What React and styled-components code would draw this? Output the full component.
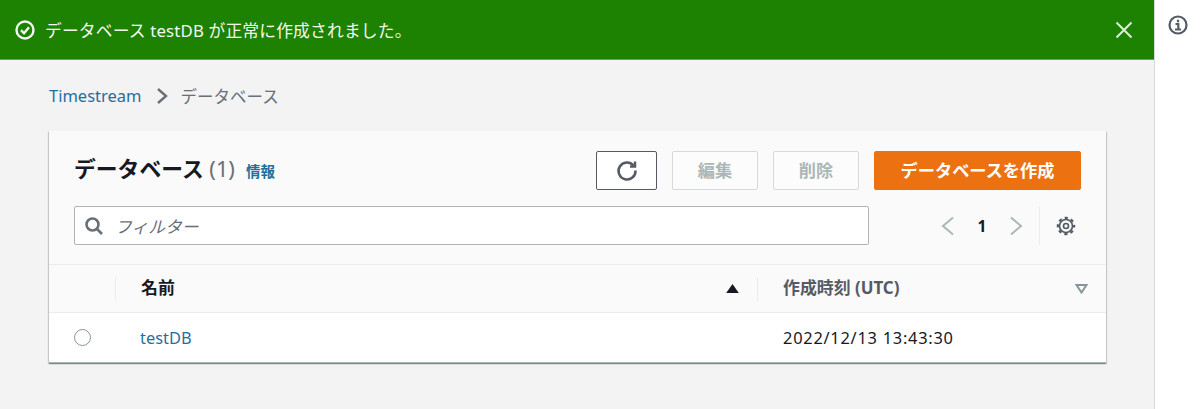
import React from 'react';
import styled, { createGlobalStyle } from 'styled-components';

const Global = createGlobalStyle`
  html, body { margin: 0; padding: 0; background: #fff; }
  body { font-family: "Noto Sans", "Noto Sans CJK JP", sans-serif; color: #16191f; }
`;

const Shell = styled.div`
  display: flex;
  width: 1200px;
  height: 409px;
  overflow: hidden;
`;

const Main = styled.div`
  width: 1154px;
  flex: none;
  background: #f3f3f3;
  display: flex;
  flex-direction: column;
`;

const Rail = styled.div`
  flex: 1;
  background: #fff;
  border-left: 1px solid #d5dbdb;
  display: flex;
  justify-content: center;
  padding-top: 15px;
  align-items: flex-start;
  color: #545b64;
`;

const Flash = styled.div`
  height: 59px;
  background: #1d8102;
  border-bottom: 1px solid #6f9e66;
  display: flex;
  align-items: center;
  padding: 0 21px 0 15px;
  color: #f2f8f0;
  font-size: 16.8px;
  letter-spacing: 0.15px;
`;

const FlashText = styled.span`
  margin-left: 10px;
  flex: 1;
`;

const Content = styled.div`
  padding: 0 48px 0 49px;
`;

const Crumbs = styled.div`
  height: 71px;
  display: flex;
  align-items: center;
  font-size: 16.5px;
  color: #687078;
`;

const Link = styled.a`
  color: #1f6f9e;
`;

const CrumbSep = styled.svg`
  margin: 0 12px 0 13px;
`;

const Card = styled.div`
  background: #fff;
  box-shadow: 0 1px 1px 0 rgba(0, 28, 36, 0.3), 1px 1px 1px 0 rgba(0, 28, 36, 0.15), -1px 1px 1px 0 rgba(0, 28, 36, 0.15);
  border-bottom: 1px solid #aab7b8;
`;

const CardHead = styled.div`
  background: #fafafa;
  padding: 20px 25px 20px 25px;
  display: flex;
  flex-direction: column;
  gap: 16px;
  border-bottom: 1px solid #eaeded;
  height: 93px;
`;

const HeadRow = styled.div`
  display: flex;
  align-items: center;
  justify-content: space-between;
  height: 39px;
`;

const TitleWrap = styled.div`
  display: flex;
  align-items: center;
  gap: 11px;
`;

const Title = styled.h1`
  margin: 0 0 3px;
  font-size: 21.8px;
  font-weight: 700;
  line-height: 34px;
`;

const Count = styled.span`
  font-weight: 400;
  color: #687078;
`;

const Info = styled(Link)`
  font-size: 14.5px;
  font-weight: 700;
`;

const Actions = styled.div`
  display: flex;
  gap: 15px;
`;

const Button = styled.button`
  height: 39px;
  width: ${p => p.$w}px;
  box-sizing: border-box;
  padding: 0 0 2px;
  border-radius: 2px;
  border: 1px solid ${p => p.$dark ? '#545b64' : '#d5dbdb'};
  background: ${p => p.$dark ? '#fff' : '#fcfcfc'};
  color: ${p => p.$dark ? '#545b64' : '#aab7b8'};
  font: 700 17.2px "Noto Sans", "Noto Sans CJK JP", sans-serif;
  display: flex;
  align-items: center;
  justify-content: center;
`;

const Primary = styled(Button)`
  background: #ec7211;
  border-color: #ec7211;
  color: #fff;
`;

const Search = styled.div`
  width: 795px;
  height: 39px;
  box-sizing: border-box;
  background: #fff;
  border: 1px solid #aab7b8;
  border-radius: 2px;
  display: flex;
  align-items: center;
  padding-left: 9px;
  gap: 11px;
  color: #687078;
`;

const Placeholder = styled.span`
  font-size: 16.8px;
  font-style: italic;
  color: #687078;
`;

const Pager = styled.div`
  display: flex;
  align-items: center;
  height: 39px;
  margin-right: 5px;
  color: #aab7b8;
`;

const PageNum = styled.span`
  font-weight: 700;
  font-size: 15.5px;
  width: 10px;
  text-align: center;
  color: #16191f;
  margin: 0 22px;
`;

const PagerSplit = styled.div`
  width: 1px;
  height: 39px;
  background: #eaeded;
  margin: 0 16px;
`;

const Row = styled.div`
  display: grid;
  grid-template-columns: 66px 1fr 349px;
  align-items: center;
  height: ${p => p.$h}px;
  background: ${p => p.$head ? '#fafafa' : '#fff'};
  border-bottom: ${p => p.$head ? '1px solid #eaeded' : 'none'};
`;

const Cell = styled.div`
  display: flex;
  align-items: center;
  justify-content: space-between;
  padding: 0 18px 0 25px;
  height: 24px;
  font-size: 16.4px;
  line-height: 24px;
  border-left: ${p => p.$split ? '1px solid #eaeded' : 'none'};
`;

const HeadLabel = styled.span`
  font-weight: 700;
  font-size: 16.9px;
  margin-top: -2px;
  color: ${p => p.$muted ? '#545b64' : '#16191f'};
`;

const DateText = styled.span`
  letter-spacing: 0.75px;
  margin-left: 1px;
`;

const Radio = styled.span`
  width: 15px;
  height: 15px;
  border: 1.5px solid #879596;
  border-radius: 50%;
  background: #fff;
`;

const Chevron = ({ left }) => (
  <svg width="14" height="22" viewBox="0 0 14 22" fill="none" stroke="currentColor" strokeWidth="2">
    <path d={left ? 'M12 2.500 2 11l10 8.500' : 'M2 2.500 12 11 2 19.500'} />
  </svg>
);

export default function App() {
  return (
    <Shell>
      <Global />
      <Main>
        <Flash>
          <svg width="20" height="20" viewBox="0 0 20 20" fill="none" stroke="currentColor" strokeWidth="2.400">
            <circle cx="10" cy="10" r="8.500" />
            <path d="M6 10.200l3 3 5-6" />
          </svg>
          <FlashText>データベース testDB が正常に作成されました。</FlashText>
          <svg width="18" height="18" viewBox="0 0 18 18" fill="none" stroke="#dcefd8" strokeWidth="2">
            <path d="M1.500 1.500l15 15M16.500 1.500l-15 15" />
          </svg>
        </Flash>
        <Content>
          <Crumbs>
            <Link>Timestream</Link>
            <CrumbSep width="14" height="20" viewBox="0 0 14 20" fill="none" stroke="#687078" strokeWidth="2.400">
              <path d="M3 3l8 7-8 7" />
            </CrumbSep>
            データベース
          </Crumbs>
          <Card>
            <CardHead>
              <HeadRow>
                <TitleWrap>
                  <Title>データベース <Count>(1)</Count></Title>
                  <Info>情報</Info>
                </TitleWrap>
                <Actions>
                  <Button $dark $w={61}>
                    <svg width="24" height="24" viewBox="0 0 24 24" fill="none" stroke="currentColor" strokeWidth="2.500">
                      <path d="M18.500 7.500A8.500 8.500 0 1 0 20.500 12.500" />
                      <path d="M20 3.500v5h-5" />
                    </svg>
                  </Button>
                  <Button $w={86}>編集</Button>
                  <Button $w={86}>削除</Button>
                  <Primary $w={207}>データベースを作成</Primary>
                </Actions>
              </HeadRow>
              <HeadRow>
                <Search>
                  <svg width="20" height="20" viewBox="0 0 20 20" fill="none" stroke="currentColor" strokeWidth="2.600">
                    <circle cx="8.500" cy="8.500" r="6" />
                    <path d="M13 13l5 5" />
                  </svg>
                  <Placeholder>フィルター</Placeholder>
                </Search>
                <Pager>
                  <Chevron left />
                  <PageNum>1</PageNum>
                  <Chevron />
                  <PagerSplit />
                  <svg width="20" height="20" viewBox="0 0 24 24" fill="none" stroke="#545b64">
                    <circle cx="12" cy="12" r="3" strokeWidth="2" />
                    <circle cx="12" cy="12" r="7.800" strokeWidth="2" />
                    <circle cx="12" cy="12" r="9.800" strokeWidth="2.600" strokeDasharray="3.850 3.850" strokeDashoffset="1.925" />
                  </svg>
                </Pager>
              </HeadRow>
            </CardHead>
            <Row $head $h={47}>
              <div />
              <Cell $split>
                <HeadLabel>名前</HeadLabel>
                <svg width="13" height="9" viewBox="0 0 14 10"><path d="M7 0l7 10H0z" fill="#16191f" /></svg>
              </Cell>
              <Cell $split>
                <HeadLabel $muted>作成時刻 (UTC)</HeadLabel>
                <svg width="13" height="10" viewBox="0 0 13 10" fill="none" stroke="#879596" strokeWidth="2"><path d="M1.500 1h10l-5 7.500z" /></svg>
              </Cell>
            </Row>
            <Row $h={49}>
              <Cell><Radio /></Cell>
              <Cell><Link>testDB</Link></Cell>
              <Cell><DateText>2022/12/13 13:43:30</DateText></Cell>
            </Row>
          </Card>
        </Content>
      </Main>
      <Rail>
        <svg width="20" height="20" viewBox="0 0 20 20" fill="none" stroke="currentColor" strokeWidth="2.200">
          <circle cx="10" cy="10" r="8.500" />
          <path d="M10 4.800v2.400M7.500 9h2.800v5.500M7 14.500h6" />
        </svg>
      </Rail>
    </Shell>
  );
}
